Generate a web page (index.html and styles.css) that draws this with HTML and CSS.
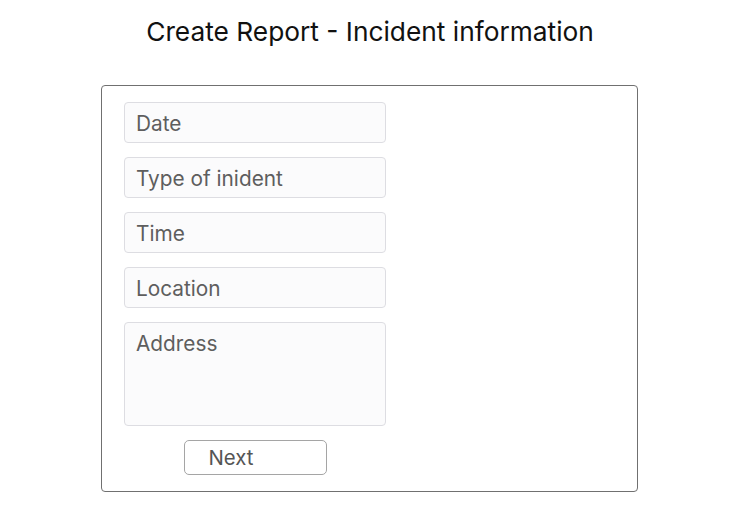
FILE: index.html
```html
<!DOCTYPE html>
<html>
<head>
<meta charset="utf-8">
<link rel="stylesheet" href="styles.css">
</head>
<body>
<h1 class="title">Create Report - Incident information</h1>
<div class="card">
  <form class="form">
    <input class="field" type="text" placeholder="Date">
    <input class="field" type="text" placeholder="Type of inident">
    <input class="field" type="text" placeholder="Time">
    <input class="field" type="text" placeholder="Location">
    <textarea class="field area" placeholder="Address"></textarea>
    <button class="next" type="button">Next</button>
  </form>
</div>
</body>
</html>
```
FILE: styles.css
```css
* { box-sizing: border-box; }
body {
  margin: 0;
  font-family: Inter, "Noto Sans", sans-serif;
  background: #fff;
}
.title {
  margin: 0;
  padding-top: 16px;
  height: 85px;
  text-align: center;
  font-weight: 400;
  font-size: 26.3px;
  color: #111;
}
.card {
  margin-left: 101px;
  width: 537px;
  height: 407px;
  border: 1px solid #707070;
  border-radius: 4px;
  padding: 16px 22px;
}
.form {
  width: 262px;
  display: flex;
  flex-direction: column;
  gap: 14px;
}
.field {
  height: 41px;
  border: 1px solid #dddde2;
  border-radius: 4px;
  background: #fbfbfc;
  font-family: Inter, "Noto Sans", sans-serif;
  font-size: 20.8px;
  padding: 2px 11px 0;
  color: #5a5a5a;
  outline: none;
}
.field::placeholder { color: #5e5e5e; }
.area {
  height: 104px;
  resize: none;
  padding-top: 8px;
}
.next {
  align-self: center;
  margin-top: 0;
  width: 143px;
  height: 35px;
  border: 1px solid #a5a5a5;
  border-radius: 5px;
  background: #fff;
  font-family: Inter, "Noto Sans", sans-serif;
  font-size: 20.4px;
  color: #555;
  text-align: left;
  padding: 0 0 0 24px;
}
```
